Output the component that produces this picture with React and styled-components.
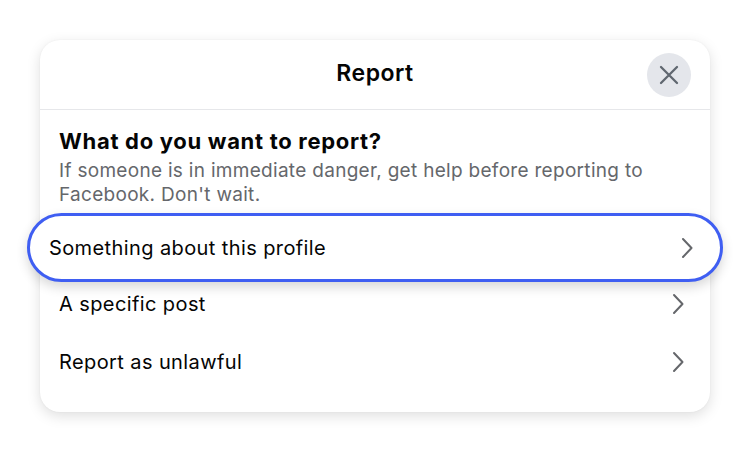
import React from "react";
import styled, { createGlobalStyle } from "styled-components";

const Global = createGlobalStyle`
  html, body { margin: 0; padding: 0; background: #ffffff; }
  body { font-family: Inter, "Noto Sans", "Liberation Sans", sans-serif; color: #050505; }
  * { box-sizing: border-box; }
`;

const Page = styled.div`
  width: 750px;
  height: 453px;
  padding: 40px 40px 0 40px;
`;

const Card = styled.div`
  width: 670px;
  height: 372px;
  background: #fff;
  border-radius: 20px;
  box-shadow: 0 4px 14px rgba(0, 0, 0, 0.13), 0 0 2px rgba(0, 0, 0, 0.05);
  display: flex;
  flex-direction: column;
`;

const Header = styled.div`
  height: 70px;
  border-bottom: 1px solid #e6e7ea;
  display: grid;
  grid-template-columns: 44px 1fr 44px;
  align-items: center;
  padding: 0 19px;
`;

const Title = styled.h1`
  grid-column: 2;
  margin: 0 0 3px;
  text-align: center;
  font-size: 23px;
  font-weight: 600;
  letter-spacing: 0.5px;
  color: #050505;
`;

const CloseButton = styled.button`
  grid-column: 3;
  justify-self: end;
  width: 44px;
  height: 44px;
  border-radius: 50%;
  border: none;
  background: #e4e6eb;
  display: flex;
  align-items: center;
  justify-content: center;
  padding: 0;
`;

const Body = styled.div`
  padding: 18px 19px 20px;
  display: flex;
  flex-direction: column;
`;

const Heading = styled.h2`
  margin: 0;
  font-size: 22px;
  line-height: 26px;
  font-weight: 700;
  color: #050505;
  letter-spacing: 0.7px;
`;

const Sub = styled.p`
  margin: 5px 0 0;
  font-size: 19px;
  line-height: 24px;
  color: #65676b;
  letter-spacing: 0.3px;
`;

const List = styled.div`
  margin-top: 10px;
  display: flex;
  flex-direction: column;
`;

const Row = styled.div`
  height: 58px;
  display: flex;
  align-items: center;
  justify-content: space-between;
  padding-right: 6px;
  font-size: 20px;
  letter-spacing: 0.4px;
  color: #050505;
  ${(p) =>
    p.$focused &&
    `
    height: 69px;
    margin: -4px -32px -7px;
    padding: 0 26px 0 19px;
    border: 3px solid #3f5ef2;
    border-radius: 35px;
    background: #fff;
    box-shadow: 0 5px 12px rgba(0,0,0,0.16);
    position: relative;
    z-index: 1;
  `}
`;

const Chevron = () => (
  <svg width="14" height="22" viewBox="0 0 14 22" fill="none">
    <path d="M3 2 L11.5 11 L3 20" stroke="#65676b" strokeWidth="2" strokeLinecap="round" strokeLinejoin="round" />
  </svg>
);

const CloseIcon = () => (
  <svg width="20" height="20" viewBox="0 0 20 20" fill="none">
    <path d="M2 2 L18 18 M18 2 L2 18" stroke="#606770" strokeWidth="2.3" strokeLinecap="round" />
  </svg>
);

const items = [
  { label: "Something about this profile", focused: true },
  { label: "A specific post" },
  { label: "Report as unlawful" },
];

export default function App() {
  return (
    <>
      <Global />
      <Page>
        <Card>
          <Header>
            <Title>Report</Title>
            <CloseButton aria-label="Close">
              <CloseIcon />
            </CloseButton>
          </Header>
          <Body>
            <Heading>What do you want to report?</Heading>
            <Sub>If someone is in immediate danger, get help before reporting to Facebook. Don't wait.</Sub>
            <List>
              {items.map((it) => (
                <Row key={it.label} $focused={it.focused}>
                  <span>{it.label}</span>
                  <Chevron />
                </Row>
              ))}
            </List>
          </Body>
        </Card>
      </Page>
    </>
  );
}
